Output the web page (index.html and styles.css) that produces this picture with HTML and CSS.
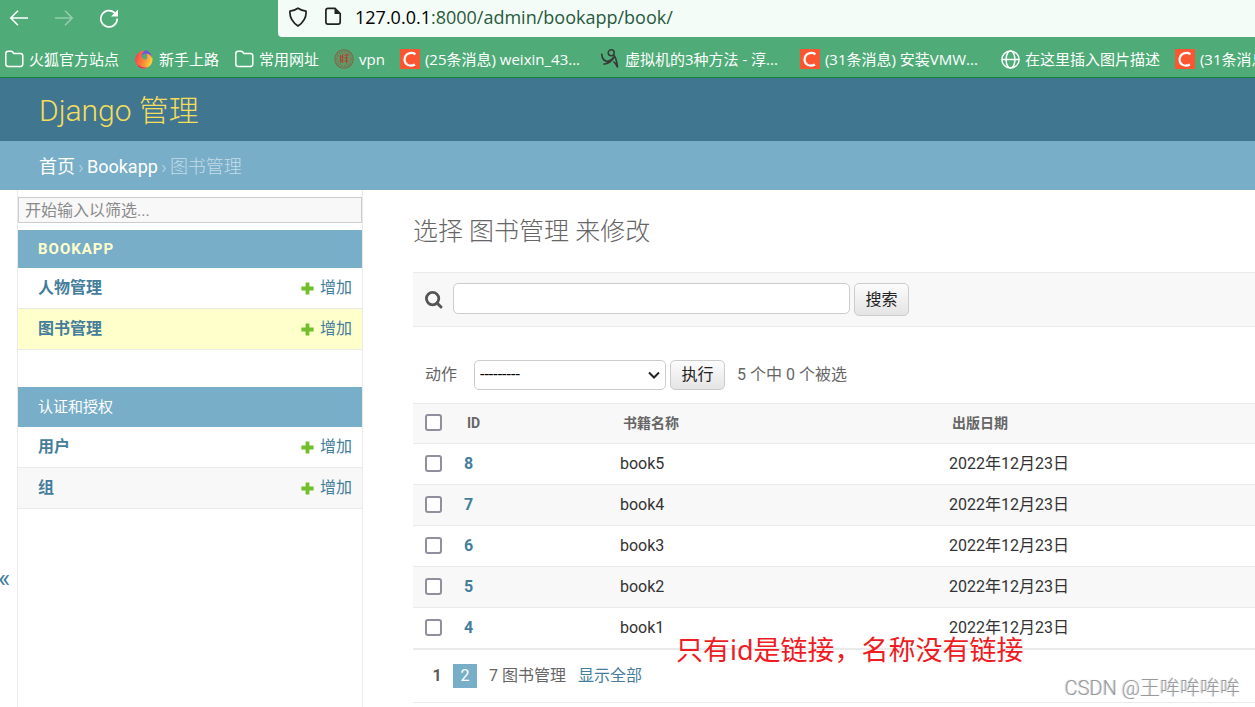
FILE: index.html
```html
<!DOCTYPE html>
<html lang="zh-CN">
<head>
<meta charset="utf-8">
<title>选择 图书管理 来修改 | Django 管理</title>
<link rel="stylesheet" href="styles.css">
</head>
<body>
<svg class="defs" aria-hidden="true">
  <defs>
    <symbol id="folder" viewBox="0 0 20 20"><path d="M1.8 5.2V4.6Q1.8 2.2 4.2 2.2H7Q8 2.2 8.7 3L9.8 4.4H16.4Q18.8 4.4 18.8 6.8V15Q18.8 17.4 16.4 17.4H4.2Q1.8 17.4 1.8 15Z" fill="none" stroke="currentColor" stroke-width="1.5"/></symbol>
    <symbol id="csdn" viewBox="0 0 20 20"><path d="M0 0H20V20H0Z" fill="#fc5531"/><path d="M15.5 5.2C11 2.4 5 4.6 4.6 10.2C4.4 15.6 9.6 18.2 15 15.4" fill="none" stroke="#fff" stroke-width="2.2"/></symbol>
    <symbol id="plus" viewBox="0 0 13 13"><path d="M4.6 0.4H8.4V4.6H12.6V8.4H8.4V12.6H4.6V8.4H0.4V4.6H4.6Z" fill="#70bf2b"/></symbol>
  </defs>
</svg>

<div class="browser">
  <div class="toolbar">
    <div class="nav-buttons">
      <button type="button" aria-label="后退"><svg width="20" height="20" viewBox="0 0 20 20"><path d="M19 9H2M9 1.8L1.8 9L9 16.2" fill="none" stroke="#fff" stroke-width="1.6"/></svg></button>
      <button type="button" aria-label="前进" disabled><svg width="20" height="20" viewBox="0 0 20 20"><path d="M1 9H18M11 1.8L18.2 9L11 16.2" fill="none" stroke="#fff" stroke-width="1.6"/></svg></button>
      <button type="button" aria-label="刷新"><svg width="20" height="20" viewBox="0 0 20 20"><path d="M16.4 4.6A8.2 8.2 0 1 0 18.2 9.6" fill="none" stroke="#fff" stroke-width="1.7"/><path d="M19 0.4V7.4H12Z" fill="#fff"/></svg></button>
    </div>
    <div class="address">
      <svg width="20" height="20" viewBox="0 0 20 20"><path d="M10 1.2Q13.5 3.6 18 4.1Q18.9 12.6 10 19Q1.1 12.6 2 4.1Q6.5 3.6 10 1.2Z" fill="none" stroke="#222" stroke-width="1.7" stroke-linejoin="round"/></svg>
      <svg width="20" height="20" viewBox="0 0 20 20"><path d="M5 1.3H12L17.2 6.5V15Q17.2 17.1 15.1 17.1H5Q2.9 17.1 2.9 15V3.4Q2.9 1.3 5 1.3Z" fill="none" stroke="#222" stroke-width="1.7"/><path d="M11.5 1.4V7H17.2Z" fill="#222"/></svg>
      <span class="url"><b>127.0.0.1</b>:8000/admin/bookapp/book/</span>
    </div>
  </div>
  <nav class="bookmarks">
    <a href="#"><svg><use href="#folder"/></svg>火狐官方站点</a>
    <a href="#"><svg viewBox="0 0 20 20"><defs><linearGradient id="fox" x1="0" y1="0.2" x2="1" y2="0.5"><stop offset="0" stop-color="#f23a5c"/><stop offset="0.5" stop-color="#ff8136"/><stop offset="1" stop-color="#ffd23f"/></linearGradient></defs><circle cx="9.8" cy="10.6" r="8.8" fill="url(#fox)"/><path d="M7.5 6.8C7.8 3.4 10.4 1.6 12.2 1.2C16.4 2.8 18.2 6.6 17.8 9.2C16.8 5.6 14.4 4.6 12 4.8C13.6 7.4 13 9.6 10.6 9.8C8.8 9.8 7.8 8.4 7.5 6.8Z" fill="#6c55d8"/><path d="M8.2 6.4C8.8 4.8 10.8 4.2 12 5.2C14 7.4 13.4 10.4 10.8 10.6C8.8 10.4 7.8 8.4 8.2 6.4Z" fill="#4fac78"/><path d="M2.8 15.2Q8 19.8 14 18.2Q10 20.6 6 18.8Q4 17.4 2.8 15.2Z" fill="#e9226b"/></svg>新手上路</a>
    <a href="#"><svg><use href="#folder"/></svg>常用网址</a>
    <a href="#"><svg viewBox="0 0 20 20"><circle cx="10" cy="10" r="9.2" fill="#5f9a68" stroke="#7b6a4e" stroke-width="1.1"/><circle cx="10" cy="10" r="7" fill="none" stroke="#86674d" stroke-dasharray="2 1"/><path d="M6.5 6V14M8.6 5V14M5.5 8H9.5M10.4 6H14.6M10.4 9H14.6M12.5 5V14.5M10.4 12H14.6M5.5 12L9 11" stroke="#b5402f" stroke-width="1.1" fill="none"/></svg>vpn</a>
    <a href="#" class="long"><svg><use href="#csdn"/></svg>(25条消息) weixin_43...</a>
    <a href="#" class="long"><svg viewBox="0 0 20 20"><circle cx="11.2" cy="3.8" r="3" fill="none" stroke="#383838" stroke-width="1.5"/><path d="M1.6 4.6Q1.8 8.6 4.2 11.6M3.4 15.2Q11 14.6 14.6 7.2Q16.6 10.6 17.6 18.6Q16 14 13.4 12.6M2 7.6Q4.4 12.6 8 12.4Q11.2 11.6 14.4 7.4" fill="none" stroke="#383838" stroke-width="1.6"/></svg>虚拟机的3种方法 - 淳...</a>
    <a href="#" class="long"><svg><use href="#csdn"/></svg>(31条消息) 安装VMW...</a>
    <a href="#"><svg viewBox="0 0 20 20"><g fill="none" stroke="#fff" stroke-width="1.5"><circle cx="10.5" cy="10.5" r="8.6"/><ellipse cx="10.5" cy="10.5" rx="4.4" ry="8.6"/><path d="M2 10.5H19"/></g></svg>在这里插入图片描述</a>
    <a href="#" class="long"><svg><use href="#csdn"/></svg>(31条消息)</a>
  </nav>
</div>

<header class="site-header"><a href="#">Django 管理</a></header>
<nav class="breadcrumbs"><a href="#">首页</a><span class="sep">›</span><a href="#" class="app">Bookapp</a><span class="sep">›</span><span>图书管理</span></nav>

<div class="page">
  <button type="button" class="sidebar-toggle" aria-label="切换导航">«</button>
  <aside class="sidebar">
    <input class="filter" type="search" placeholder="开始输入以筛选..." aria-label="筛选导航项目">
    <section class="module">
      <h2>BOOKAPP</h2>
      <div class="model"><a class="name" href="#">人物管理</a><a class="add" href="#"><svg><use href="#plus"/></svg>增加</a></div>
      <div class="model current"><a class="name" href="#">图书管理</a><a class="add" href="#"><svg><use href="#plus"/></svg>增加</a></div>
    </section>
    <section class="module">
      <h2 class="plain">认证和授权</h2>
      <div class="model"><a class="name" href="#">用户</a><a class="add" href="#"><svg><use href="#plus"/></svg>增加</a></div>
      <div class="model even"><a class="name" href="#">组</a><a class="add" href="#"><svg><use href="#plus"/></svg>增加</a></div>
    </section>
  </aside>

  <main class="content">
    <h1>选择 图书管理 来修改</h1>
    <form class="search">
      <label for="searchbar" aria-label="搜索"><svg width="20" height="20" viewBox="0 0 20 20"><circle cx="8.6" cy="8.6" r="6.2" fill="none" stroke="#555" stroke-width="2.8"/><path d="M13 13L17 17" stroke="#555" stroke-width="3" stroke-linecap="round"/></svg></label>
      <input id="searchbar" type="text">
      <button type="button">搜索</button>
    </form>
    <div class="actions">
      <label for="action">动作</label>
      <div class="select"><select id="action"><option>---------</option></select><svg width="14" height="14" viewBox="0 0 14 14"><path d="M2 4.5L7 9.5L12 4.5" fill="none" stroke="#222" stroke-width="2"/></svg></div>
      <button type="button">执行</button>
      <span class="counter">5 个中 0 个被选</span>
    </div>
    <table>
      <thead><tr><th class="check"><input type="checkbox" aria-label="全选"></th><th class="id">ID</th><th class="title">书籍名称</th><th>出版日期</th></tr></thead>
      <tbody>
        <tr><td><input type="checkbox" aria-label="选择 8"></td><td><a href="#">8</a></td><td>book5</td><td>2022年12月23日</td></tr>
        <tr><td><input type="checkbox" aria-label="选择 7"></td><td><a href="#">7</a></td><td>book4</td><td>2022年12月23日</td></tr>
        <tr><td><input type="checkbox" aria-label="选择 6"></td><td><a href="#">6</a></td><td>book3</td><td>2022年12月23日</td></tr>
        <tr><td><input type="checkbox" aria-label="选择 5"></td><td><a href="#">5</a></td><td>book2</td><td>2022年12月23日</td></tr>
        <tr><td><input type="checkbox" aria-label="选择 4"></td><td><a href="#">4</a></td><td>book1</td><td>2022年12月23日</td></tr>
      </tbody>
    </table>
    <div class="paginator"><a class="number" href="#">1</a><span class="this-page">2</span><span>7 图书管理</span><a class="all" href="#">显示全部</a></div>
  </main>
</div>

<p class="note">只有id是链接，名称没有链接</p>
<p class="watermark">CSDN @王哞哞哞哞</p>
</body>
</html>
```
FILE: styles.css
```css
* { box-sizing: border-box; }
html, body { height: 100%; }
body {
  margin: 0;
  display: flex;
  flex-direction: column;
  position: relative;
  overflow: hidden;
  background: #fff;
  color: #333;
  font: 16px/20px Roboto, "Noto Sans CJK SC", sans-serif;
}
a { color: #447e9b; text-decoration: none; }
button, input, select { font: inherit; color: inherit; }
h1, h2, p { margin: 0; }
svg { flex: none; display: block; }
.defs { position: absolute; width: 0; height: 0; }

/* Browser chrome */
.browser {
  flex: none;
  background: #4fac78;
  border-bottom: 1px solid #14823f;
  color: #fff;
  font-family: "Open Sans", "Noto Sans CJK SC", sans-serif;
}
.toolbar { display: flex; height: 37px; }
.nav-buttons { display: flex; gap: 25px; width: 278px; padding: 0 9px; align-items: center; flex: none; }
.nav-buttons button { border: 0; padding: 0; background: none; }
.nav-buttons button:disabled { opacity: 0.4; }
.address {
  flex: 1;
  display: flex;
  align-items: center;
  gap: 15px;
  padding: 0 10px 3px;
  background: #f3fcf7;
  border-bottom-left-radius: 4px;
}
.url { font-size: 18px; color: #28593d; margin-left: -3px; }
.url b { font-weight: 400; color: #000; }
.bookmarks { display: flex; gap: 15px; height: 40px; padding: 5px 0 1px 4px; overflow: hidden; white-space: nowrap; }
.bookmarks a { display: flex; gap: 5px; align-items: center; flex: none; color: #fff; font-size: 15px; }
.bookmarks a.long { width: 185px; }
.bookmarks svg { width: 20px; height: 20px; }

/* Site header */
.site-header { flex: none; height: 63px; padding: 0 39px; background: #417690; font-size: 30px; font-weight: 300; line-height: 66px; }
.site-header a { color: #f5dd5d; }
.breadcrumbs { flex: none; display: flex; height: 49px; padding: 0 39px; background: #79aec8; color: #c4dce8; font-size: 18px; font-weight: 300; line-height: 51px; }
.breadcrumbs a { color: #fff; font-weight: 400; }
.sep { width: 12px; text-align: center; }

/* Sidebar */
.page { flex: 1; display: flex; min-height: 0; }
.sidebar-toggle { flex: none; display: flex; align-items: center; width: 17px; padding: 258px 0 0; border: 0; background: none; color: #447e9b; font-size: 26px; text-indent: -2px; }
.sidebar { flex: none; width: 346px; padding-top: 7px; border: solid #eaeaea; border-width: 0 1px; }
.filter { display: block; width: 100%; height: 26px; padding: 0 6px; border: 1px solid #ccc; border-radius: 0; background: #f8f8f8; outline: 0; appearance: none; }
.filter::placeholder { color: #8a8a8a; font-weight: 400; opacity: 1; }
.module { margin-top: 7px; }
.module + .module { margin-top: 37px; }
.module h2 { padding: 9px 20px; background: #79aec8; color: #ffc; font-size: 15px; font-weight: 700; letter-spacing: 1px; }
.module h2.plain { padding: 10px 20px; color: #fff; font-weight: 400; letter-spacing: 0; }
.model { display: flex; justify-content: space-between; padding: 10px 10px 10px 20px; border-bottom: 1px solid #eaeaea; }
.model.even { background: #f8f8f8; }
.model.current { background: #ffc; }
.name { font-weight: 700; }
.add { display: flex; align-items: center; gap: 6px; }
.add svg { width: 13px; height: 13px; }

/* Change list */
.content { flex: 1; min-width: 0; padding: 26px 0 0 50px; }
h1 { color: #666; font-size: 25px; font-weight: 300; line-height: 32px; }
.search { display: flex; gap: 4px; align-items: flex-start; margin-top: 24px; height: 55px; padding: 10px 11px; border: solid #eaeaea; border-width: 1px 0; background: #f8f8f8; }
.search label { width: 25px; padding: 7px 0 0; }
.search input { width: 397px; height: 31px; padding: 4px 6px; border: 1px solid #ccc; border-radius: 5px; background: #fff; }
.content button { width: 55px; height: 30px; padding: 0; border: 1px solid #ccc; border-radius: 5px; background: linear-gradient(#fcfcfc, #e4e4e4); color: #222; line-height: 28px; }
.content .search button { height: 33px; line-height: 31px; }
.actions { display: flex; align-items: center; gap: 4px; padding: 33px 12px 13px; color: #666; }
.actions label { width: 45px; }
.select { display: grid; width: 192px; align-items: center; }
.select select, .select svg { grid-area: 1 / 1; }
.select svg { justify-self: end; margin-right: 5px; pointer-events: none; }
.select select { width: 100%; height: 30px; padding: 0 5px; border: 1px solid #ccc; border-radius: 5px; background: #fff; color: #000; appearance: none; }
.counter { margin-left: 8px; }
table { width: 100%; table-layout: fixed; border-collapse: separate; border-spacing: 0; border-bottom: 1px solid #eaeaea; }
th, td { padding: 10px; border-bottom: 1px solid #eaeaea; text-align: left; }
th { padding: 9px 13px; border-top: 1px solid #eaeaea; background: #f8f8f8; color: #666; font-size: 14px; font-weight: 700; line-height: 21px; }
th.check { width: 41px; padding: 0 12px 2px; }
th.id { width: 156px; }
th.title { width: 329px; }
td:first-child { padding: 0 12px 2px; }
td a { font-weight: 700; }
tbody tr:nth-child(even) { background: #f8f8f8; }
input[type="checkbox"] { display: block; appearance: none; width: 17px; height: 17px; margin: 0; border: 2px solid #8f8f9d; border-radius: 3px; background: #fff; }
.paginator { display: flex; align-items: center; height: 53px; padding: 0 12px; border-bottom: 1px solid #eaeaea; color: #666; }
.paginator .number { width: 24px; margin-right: 4px; text-align: center; color: #5b5b5b; font-weight: 700; }
.this-page { width: 24px; line-height: 24px; margin-right: 12px; text-align: center; background: #79aec8; color: #fff; }
.all { margin-left: 12px; }

/* Overlaid captions */
.note { position: absolute; left: 676px; top: 634px; color: #ee1c24; font: 27px/32px "Noto Sans", "Noto Sans CJK SC", sans-serif; white-space: nowrap; }
.watermark { position: absolute; right: 15px; bottom: 5px; color: #999; font: 300 20px/28px Roboto, "Noto Sans CJK SC", sans-serif; text-shadow: 1px 1px 0 #fff, -1px 0 1px #ccc; white-space: nowrap; }
```
